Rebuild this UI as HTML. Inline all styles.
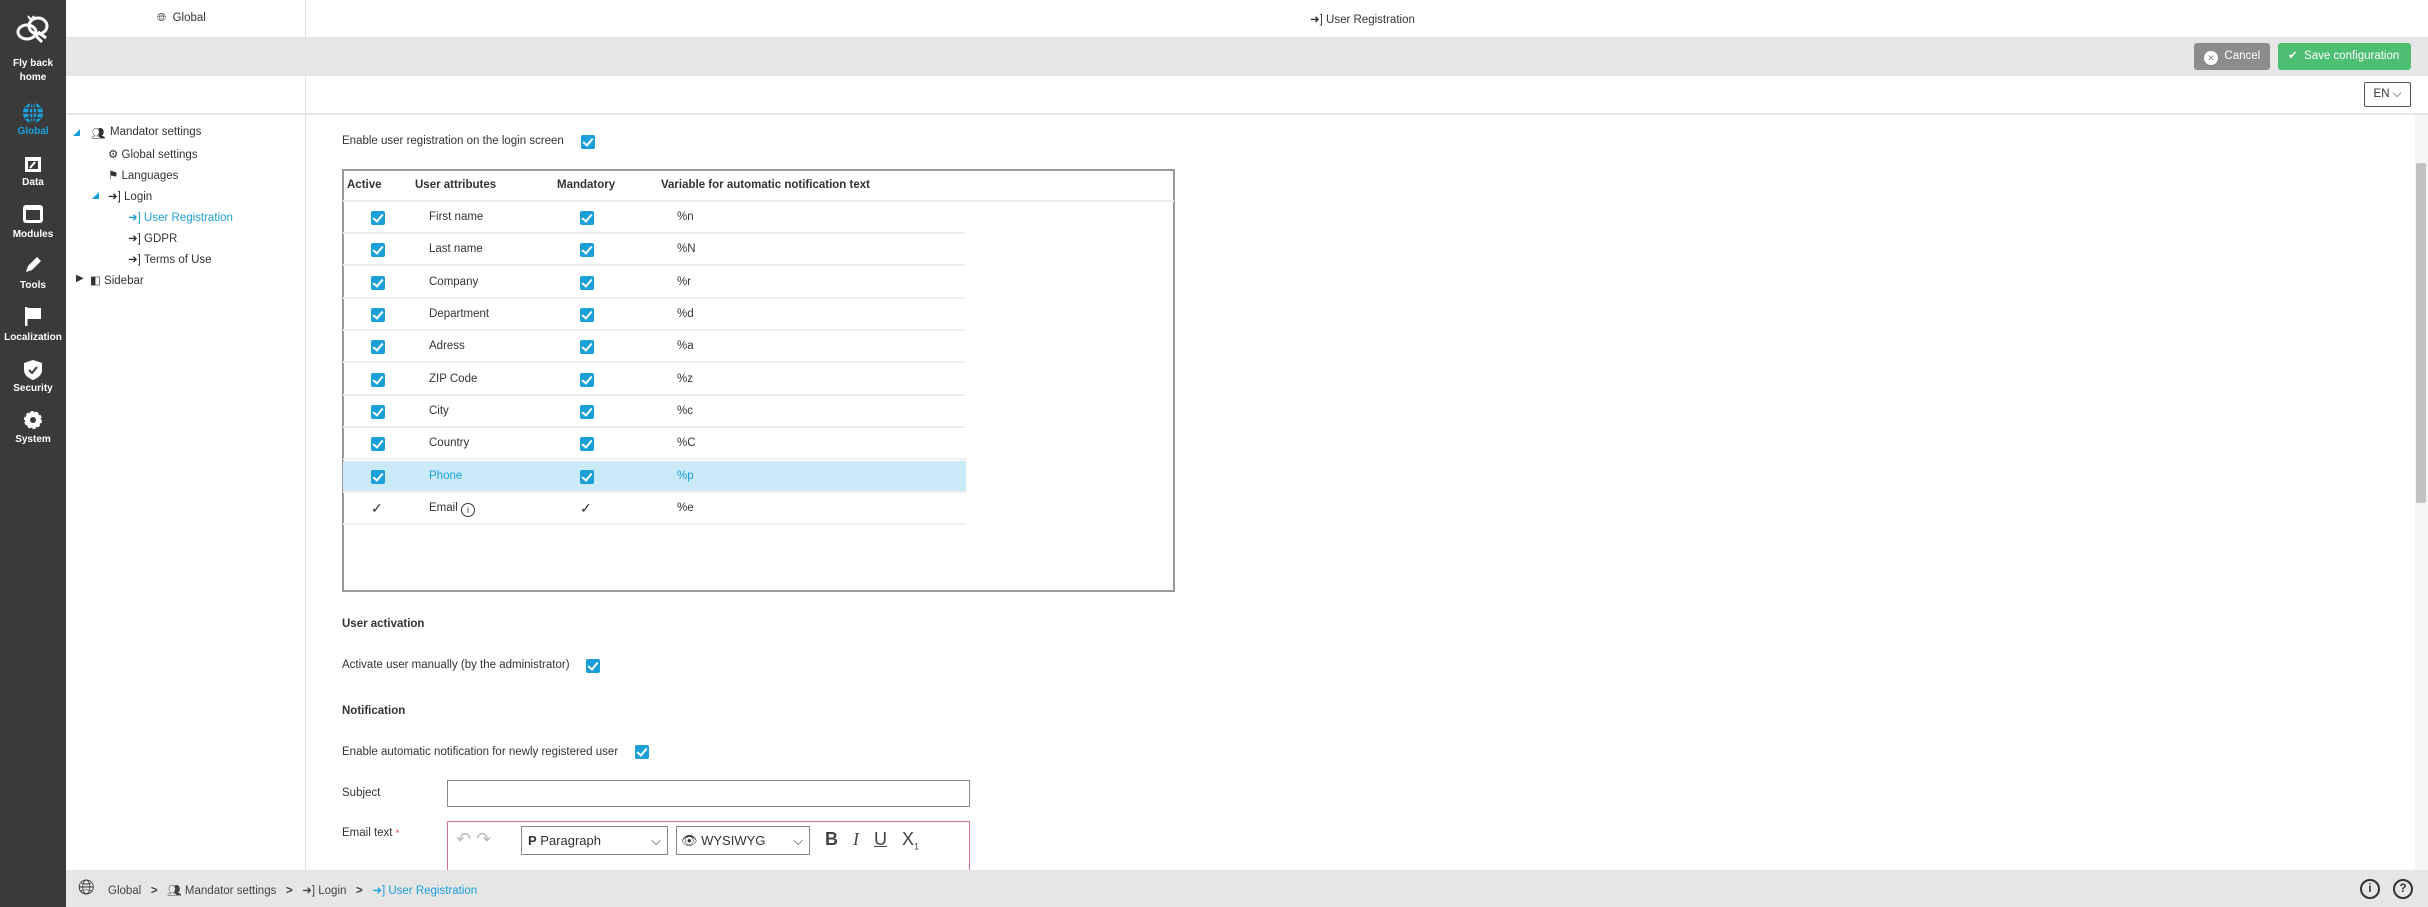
<!DOCTYPE html>
<html><head><meta charset="utf-8"><style>
*{box-sizing:border-box;margin:0;padding:0}
body{width:2428px;height:907px;overflow:hidden;font-family:"Liberation Sans",sans-serif;font-size:11.5px;color:#333;background:#fff;position:relative}
.a{position:absolute;white-space:nowrap}
.sb{left:0;top:0;width:66px;height:907px;background:#3a3a3a}
.si{position:absolute;left:0;width:66px;text-align:center;color:#fff;font-size:10px;font-weight:bold}
.cb{position:absolute;width:14px;height:14px;background:#1a9fd9;border-radius:2px}
.cb:after{content:"";position:absolute;left:4px;top:1px;width:4px;height:8px;border:solid #fff;border-width:0 2px 2px 0;transform:rotate(40deg)}
.row{position:absolute;left:343px;width:623px;height:32px;border-bottom:2px solid #f0f0f0}
.b{font-weight:bold}
.tri{position:absolute;width:0;height:0;border-left:7px solid transparent;border-bottom:7px solid #1a9fd9}
</style></head><body>
<div class="a sb"></div>
<svg class="a" style="left:14px;top:12px" width="38" height="36" viewBox="0 0 38 36"><g fill="none" stroke="#fff" stroke-width="3"><ellipse cx="13" cy="20" rx="9" ry="7"/><ellipse cx="24" cy="14" rx="9" ry="8"/><path d="M20 22 l8 8 M24 20 l8 6"/></g><path d="M14 4 l3 4 3-4" stroke="#fff" stroke-width="2" fill="none"/></svg>
<div class="si" style="top:57px;line-height:14px">Fly back<br>home</div>
<svg class="a" style="left:23px;top:103px" width="20" height="20" viewBox="0 0 20 20"><circle cx="10" cy="10" r="10" fill="#1a9fd9"/><path d="M0 10h20M10 0v20M2 5h16M2 15h16" stroke="#3a3a3a" stroke-width="1.5"/><ellipse cx="10" cy="10" rx="4" ry="10" fill="none" stroke="#3a3a3a" stroke-width="1.5"/></svg>
<div class="si" style="top:126px;color:#1a9fd9">Global</div>
<svg class="a" style="left:24px;top:154px" width="18" height="19"><rect x="1" y="3" width="16" height="15" fill="#fff"/><rect x="4" y="7" width="10" height="8" fill="#3a3a3a"/><path d="M6 14l5-6" stroke="#fff" stroke-width="2"/></svg>
<div class="si" style="top:177px">Data</div>
<svg class="a" style="left:23px;top:205px" width="20" height="18"><rect x="0" y="0" width="20" height="18" rx="3" fill="#fff"/><rect x="3" y="5" width="14" height="10" fill="#3a3a3a"/></svg>
<div class="si" style="top:229px">Modules</div>
<svg class="a" style="left:24px;top:256px" width="18" height="18"><path d="M2 16l2-6 9-9 4 4-9 9z" fill="#fff"/></svg>
<div class="si" style="top:280px">Tools</div>
<svg class="a" style="left:25px;top:307px" width="17" height="19"><path d="M1 0v19" stroke="#fff" stroke-width="3"/><path d="M2 1h14v11H2z" fill="#fff"/></svg>
<div class="si" style="top:332px">Localization</div>
<svg class="a" style="left:24px;top:360px" width="18" height="20"><path d="M9 0l9 3v7c0 5-4 8-9 10C4 18 0 15 0 10V3z" fill="#fff"/><path d="M5 10l3 3 5-6" stroke="#3a3a3a" stroke-width="2" fill="none"/></svg>
<div class="si" style="top:383px">Security</div>
<svg class="a" style="left:24px;top:411px" width="18" height="18"><circle cx="9" cy="9" r="8" fill="#fff" stroke="#fff" stroke-width="2" stroke-dasharray="3 2"/><circle cx="9" cy="9" r="3" fill="#3a3a3a"/></svg>
<div class="si" style="top:434px">System</div>

<div class="a" style="left:66px;top:37px;width:2362px;height:39px;background:#e6e6e6"></div>
<div class="a" style="left:305px;top:0;width:1px;height:870px;background:#e3e3e3"></div>
<div class="a" style="left:66px;top:113px;width:2362px;height:2px;background:#e6e6e6"></div>
<div class="a" style="left:157px;top:12px">🌐︎&nbsp; Global</div>
<div class="a" style="left:1310px;top:12px">➜] User Registration</div>
<div class="a" style="left:2194px;top:43px;width:76px;height:27px;background:#8c8c8c;border-radius:3px;color:#fff;line-height:27px;padding-left:10px"><span style="display:inline-block;width:14px;height:14px;border-radius:7px;background:#fff;color:#888;font-size:9px;text-align:center;line-height:14px;vertical-align:-2px">✕</span>&nbsp; Cancel</div>
<div class="a" style="left:2278px;top:43px;width:133px;height:27px;background:#4cbf73;border-radius:3px;color:#fff;line-height:27px;padding-left:10px">✔&nbsp; Save configuration</div>
<div class="a" style="left:2364px;top:82px;width:47px;height:25px;border:1px solid #555;border-radius:2px;line-height:23px;text-align:center">EN ⌵</div>
<div class="a" style="left:2415px;top:115px;width:13px;height:755px;background:#f5f5f5"></div>
<div class="a" style="left:2416px;top:163px;width:10px;height:340px;background:#c1c1c1;border-radius:2px"></div>

<div class="tri" style="left:73px;top:129px"></div>
<div class="a" style="left:91px;top:126px">👥︎</div>
<div class="a" style="left:110px;top:126px">Mandator settings</div>
<div class="a" style="left:108px;top:147px">⚙︎ Global settings</div>
<div class="a" style="left:108px;top:168px">⚑ Languages</div>
<div class="tri" style="left:92px;top:192px"></div>
<div class="a" style="left:108px;top:189px">➜] Login</div>
<div class="a" style="left:128px;top:210px;color:#1a9fd9">➜] User Registration</div>
<div class="a" style="left:128px;top:231px">➜] GDPR</div>
<div class="a" style="left:128px;top:252px">➜] Terms of Use</div>
<div class="a" style="left:76px;top:273px;font-size:10px">▶</div>
<div class="a" style="left:90px;top:273px">◧ Sidebar</div>

<div class="a" style="left:342px;top:135px">Enable user registration on the login screen</div>
<div class="cb" style="left:581px;top:135px"></div>
<div class="a" style="left:342px;top:169px;width:833px;height:423px;border:2px solid #999"></div>
<div class="a b" style="left:347px;top:179px">Active</div>
<div class="a b" style="left:415px;top:179px">User attributes</div>
<div class="a b" style="left:557px;top:179px">Mandatory</div>
<div class="a b" style="left:661px;top:179px">Variable for automatic notification text</div>
<div class="a" style="left:343px;top:200px;width:831px;height:2px;background:#f0f0f0"></div>

<div class="row" style="top:202px"><div class="cb" style="left:28px;top:9px"></div><span class="a" style="left:86px;top:9px">First name</span><div class="cb" style="left:237px;top:9px"></div><span class="a" style="left:334px;top:9px">%n</span></div>
<div class="row" style="top:234px"><div class="cb" style="left:28px;top:9px"></div><span class="a" style="left:86px;top:9px">Last name</span><div class="cb" style="left:237px;top:9px"></div><span class="a" style="left:334px;top:9px">%N</span></div>
<div class="row" style="top:267px"><div class="cb" style="left:28px;top:9px"></div><span class="a" style="left:86px;top:9px">Company</span><div class="cb" style="left:237px;top:9px"></div><span class="a" style="left:334px;top:9px">%r</span></div>
<div class="row" style="top:299px"><div class="cb" style="left:28px;top:9px"></div><span class="a" style="left:86px;top:9px">Department</span><div class="cb" style="left:237px;top:9px"></div><span class="a" style="left:334px;top:9px">%d</span></div>
<div class="row" style="top:331px"><div class="cb" style="left:28px;top:9px"></div><span class="a" style="left:86px;top:9px">Adress</span><div class="cb" style="left:237px;top:9px"></div><span class="a" style="left:334px;top:9px">%a</span></div>
<div class="row" style="top:364px"><div class="cb" style="left:28px;top:9px"></div><span class="a" style="left:86px;top:9px">ZIP Code</span><div class="cb" style="left:237px;top:9px"></div><span class="a" style="left:334px;top:9px">%z</span></div>
<div class="row" style="top:396px"><div class="cb" style="left:28px;top:9px"></div><span class="a" style="left:86px;top:9px">City</span><div class="cb" style="left:237px;top:9px"></div><span class="a" style="left:334px;top:9px">%c</span></div>
<div class="row" style="top:428px"><div class="cb" style="left:28px;top:9px"></div><span class="a" style="left:86px;top:9px">Country</span><div class="cb" style="left:237px;top:9px"></div><span class="a" style="left:334px;top:9px">%C</span></div>
<div class="row" style="top:461px;background:#cbeaf7;color:#1a9fd9"><div class="cb" style="left:28px;top:9px"></div><span class="a" style="left:86px;top:9px">Phone</span><div class="cb" style="left:237px;top:9px"></div><span class="a" style="left:334px;top:9px">%p</span></div>
<div class="row" style="top:493px"><span class="a" style="left:28px;top:7px;font-size:14px">✓</span><span class="a" style="left:86px;top:9px">Email <span style="display:inline-block;width:14px;height:14px;border:1px solid #333;border-radius:7px;font-size:9px;text-align:center;line-height:12px;vertical-align:-2px">i</span></span><span class="a" style="left:237px;top:7px;font-size:14px">✓</span><span class="a" style="left:334px;top:9px">%e</span></div>

<div class="a b" style="left:342px;top:618px">User activation</div>
<div class="a" style="left:342px;top:659px">Activate user manually (by the administrator)</div>
<div class="cb" style="left:586px;top:659px"></div>
<div class="a b" style="left:342px;top:705px">Notification</div>
<div class="a" style="left:342px;top:746px">Enable automatic notification for newly registered user</div>
<div class="cb" style="left:635px;top:745px"></div>
<div class="a" style="left:342px;top:787px">Subject</div>
<div class="a" style="left:447px;top:780px;width:523px;height:27px;border:1px solid #888"></div>
<div class="a" style="left:342px;top:827px">Email text <span style="color:#d33;font-size:9px">*</span></div>
<div class="a" style="left:447px;top:821px;width:523px;height:60px;border:1px solid #d4758b"></div>
<div class="a" style="left:456px;top:829px;font-size:18px;color:#bbb">↶ ↷</div>
<div class="a" style="left:521px;top:826px;width:147px;height:29px;border:1px solid #888;line-height:27px;padding-left:6px;font-size:13px"><b>P</b> Paragraph<span style="position:absolute;right:6px">⌵</span></div>
<div class="a" style="left:676px;top:826px;width:134px;height:29px;border:1px solid #888;line-height:27px;padding-left:4px;font-size:13px">👁︎ WYSIWYG<span style="position:absolute;right:6px">⌵</span></div>
<div class="a" style="left:825px;top:829px;font-size:18px;color:#444"><b>B</b>&nbsp;&nbsp; <i style="font-family:'Liberation Serif'">I</i>&nbsp;&nbsp; <u>U</u>&nbsp;&nbsp; X<sub style="font-size:9px">1</sub></div>

<div class="a" style="left:66px;top:870px;width:2362px;height:37px;background:#e6e6e6"></div>
<div class="a" style="left:78px;top:876px;font-size:21px;color:#333">🌐︎</div>
<div class="a" style="left:108px;top:883px;color:#444">Global &nbsp;&nbsp;<b>&gt;</b>&nbsp;&nbsp; 👥︎ Mandator settings &nbsp;&nbsp;<b>&gt;</b>&nbsp;&nbsp; ➜] Login &nbsp;&nbsp;<b>&gt;</b>&nbsp;&nbsp; <span style="color:#1a9fd9">➜] User Registration</span></div>
<div class="a" style="left:2360px;top:879px;width:20px;height:20px;border:2px solid #333;border-radius:10px;text-align:center;font-weight:bold;line-height:16px">i</div>
<div class="a" style="left:2393px;top:879px;width:20px;height:20px;border:2px solid #333;border-radius:10px;text-align:center;font-weight:bold;line-height:16px">?</div>
</body></html>
